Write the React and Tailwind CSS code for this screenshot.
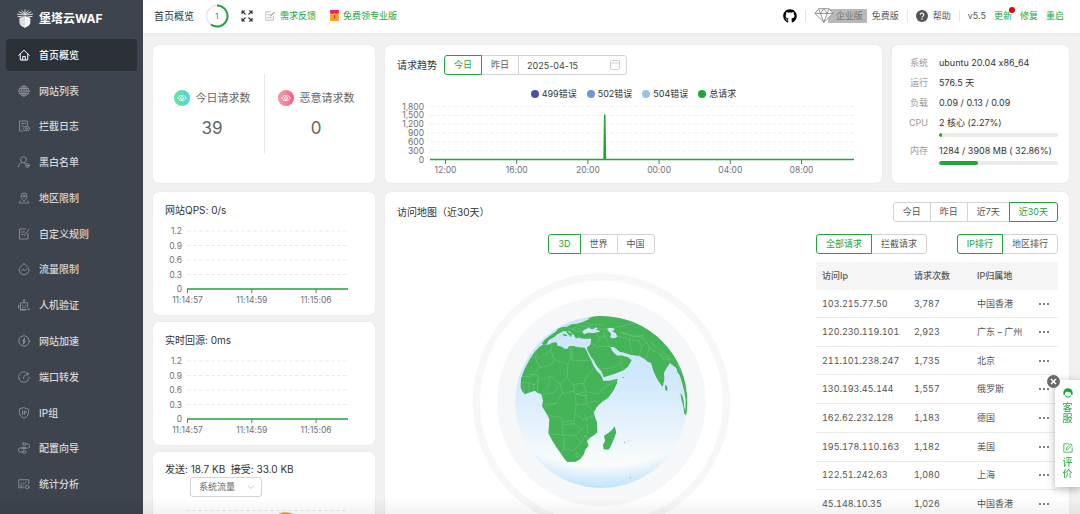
import React from "react";
import { FaGithub } from "react-icons/fa";

/* ---------- sidebar icons ---------- */

const Stroke = ({ children, className = "size-3" }) => (
  <svg
    viewBox="0 0 24 24"
    fill="none"
    stroke="currentColor"
    strokeWidth="1.8"
    strokeLinecap="round"
    strokeLinejoin="round"
    className={className}
    aria-hidden="true"
  >
    {children}
  </svg>
);

const icons = {
  home: (
    <g strokeWidth="2">
      <path d="M1.5 12.5 12 2.5l10.5 10" />
      <path d="M4.5 11v11h15V11" />
      <path d="M9.5 22v-7h5v7" />
    </g>
  ),
  globe: (
    <>
      <circle cx="12" cy="12" r="10" />
      <ellipse cx="12" cy="12" rx="4.6" ry="10" />
      <path d="M12 2v20M2 12h20M3.6 7h16.8M3.6 17h16.8" />
    </>
  ),
  log: (
    <>
      <path d="M10 22H3V2h16v8" />
      <path d="M7 7h8M7 12h4" />
      <ellipse cx="17" cy="17" rx="6" ry="4.6" />
      <circle cx="17" cy="17" r="1.6" />
    </>
  ),
  user: (
    <>
      <circle cx="11" cy="7.5" r="6" />
      <path d="M1 22c0-4.500 2.500-7.500 6-8.800" />
      <path d="M13 14.500c1 .3 1.500.6 2 1" />
      <circle cx="19" cy="19" r="3.800" />
      <path d="M17 19h4" />
    </>
  ),
  pin: (
    <>
      <path d="M12 18c-4-4-6-6.500-6-10a6 6 0 0 1 12 0c0 3.500-2 6-6 10z" />
      <circle cx="12" cy="8" r="2.200" />
      <path d="M5 18l-3 4h20l-3-4" />
    </>
  ),
  rule: (
    <>
      <path d="M15 2H3v20h17V11" />
      <path d="M7 8h6M7 13h3" />
      <path d="M22 3 12.500 15.500" />
    </>
  ),
  drop: (
    <>
      <path d="M12 1.500C16 5 22 8.500 22 14a10 9 0 0 1-20 0C2 8.500 8 5 12 1.500z" />
      <path d="M7 16l3-3.500 3.500 3 3.500-3.500" />
    </>
  ),
  robot: (
    <>
      <path d="M12 2v5" />
      <circle cx="12" cy="2.500" r="1" />
      <path d="M5 20V7.500h14V16" />
      <path d="M5 21.500h11M1.500 13v5M20 20.500h2.500" strokeWidth="2.600" />
      <path d="M9 12v.5M15 12v.5M9 16.500h6" />
    </>
  ),
  bolt: (
    <>
      <circle cx="12" cy="12" r="10.500" />
      <path d="M13 6.500 9.500 12.500h5L11 18z" fill="currentColor" />
    </>
  ),
  forward: (
    <>
      <path d="M14 1.700A10.500 10.500 0 1 0 22.500 12" />
      <path d="M11 15c0-5 3-9 9.500-9.500M16.500 2.500l4.500 3-3 4" />
    </>
  ),
  shield: (
    <>
      <path d="M12 1.500 21 4.500v7c0 5-3.500 8.500-9 11-5.500-2.500-9-6-9-11v-7z" />
      <path d="M9 8v7M12.500 15V8h2a2.200 2.200 0 0 1 0 4.400h-2" />
    </>
  ),
  route: (
    <>
      <rect x="9" y="1.500" width="7" height="5" rx="2.500" />
      <rect x="9" y="17.500" width="7" height="5" rx="2.500" />
      <path d="M16 4h3.500a4 4 0 0 1 0 8H4.500a4 4 0 0 0 0 8H9" />
      <path d="M9 10.500h6v3H9z" />
    </>
  ),
  stats: (
    <>
      <path d="M12 19.500H1.500v-16h20V11" />
      <path d="M5 13.500l4-4 3 3 5-5" />
      <circle cx="18.500" cy="18" r="3.500" />
      <path d="M5 16h5" />
    </>
  ),
};

const menu = [
  ["home", "首页概览"],
  ["globe", "网站列表"],
  ["log", "拦截日志"],
  ["user", "黑白名单"],
  ["pin", "地区限制"],
  ["rule", "自定义规则"],
  ["drop", "流量限制"],
  ["robot", "人机验证"],
  ["bolt", "网站加速"],
  ["forward", "端口转发"],
  ["shield", "IP组"],
  ["route", "配置向导"],
  ["stats", "统计分析"],
];

function Logo() {
  return (
    <svg viewBox="0 0 48 56" className="h-[19px] w-4 shrink-0" aria-hidden="true">
      <path d="M8 25l16-5 16 5v16c0 7-8 11-16 15C16 52 8 48 8 41z" fill="#f4f4f4" />
      <path d="M8 25l16-5v36C16 52 8 48 8 41z" fill="#dcddde" />
      <g stroke="#f4f4f4" strokeWidth="2.600" fill="none" strokeLinecap="round">
        <path d="M24 2v12M14 4l10 10L34 4M6 8l18 8 18-8M1 15l23 3 23-3M3 22l42 0" />
      </g>
      <path d="M6 26l18-6 18 6" stroke="#3d444d" strokeWidth="1.500" fill="none" />
    </svg>
  );
}

function Sidebar() {
  return (
    <aside className="flex h-full w-[143px] shrink-0 flex-col bg-[#3d444d] px-1.5 pb-3 text-white">
      <div className="flex h-[37px] shrink-0 items-center gap-1.5 pl-[11px]">
        <Logo />
        <span className="text-[12px] leading-4 font-bold">堡塔云WAF</span>
      </div>
      <nav className="min-h-0 flex-1">
        <ul className="grid h-full auto-rows-fr">
          {menu.map(([icon, label], i) => (
            <li key={label} className="py-0.5">
              <a
                href="#"
                aria-current={i === 0 ? "page" : undefined}
                className={
                  i === 0
                    ? "flex h-full items-center gap-[9px] rounded bg-[#2c3138] pl-3 font-medium text-white"
                    : "flex h-full items-center gap-[9px] rounded pl-3 font-medium text-[#d6d7d9]"
                }
              >
                <span className={i === 0 ? "text-white" : "text-[#8f9194]"}>
                  <Stroke>{icons[icon]}</Stroke>
                </span>
                <span className="text-[10px] leading-4">{label}</span>
              </a>
            </li>
          ))}
        </ul>
      </nav>
    </aside>
  );
}

/* ---------- header ---------- */

const Divider = () => <span className="h-3 w-px bg-[#e4e4e4]" />;

function Header() {
  return (
    <header className="flex h-[34px] shrink-0 items-center justify-between border-b border-[#e9e9e9] bg-white pr-4 pb-0.5 pl-[11px] text-[9px] leading-4">
      <div className="flex items-center">
        <h1 className="text-[10px] text-[#333]">首页概览</h1>
        <button type="button" aria-label="任务 1" className="ml-[11px]">
          <svg viewBox="0 0 24 24" className="size-6">
            <circle cx="12" cy="12" r="10.500" fill="none" stroke="#ececec" strokeWidth="1.800" />
            <path d="M12 1.500A10.500 10.500 0 1 1 6 20.600" fill="none" stroke="#20a53a" strokeWidth="2" />
            <text x="12" y="15" textAnchor="middle" fontSize="8" fill="#666">1</text>
          </svg>
        </button>
        <button type="button" aria-label="全屏" className="ml-3 text-[#333]">
          <svg viewBox="0 0 24 24" className="size-3" fill="none" stroke="currentColor" strokeWidth="2.200">
            <path d="M2 8V2h6M2 2l7 7M16 2h6v6M22 2l-7 7M2 16v6h6M2 22l7-7M22 16v6h-6M22 22l-7-7" />
          </svg>
        </button>
        <a href="#" className="ml-3 flex items-center gap-[5px] text-[#20a53a]">
          <span className="text-[#aaa]">
            <Stroke className="size-2.5">
              <path d="M13 2H2v20h18V12" />
              <path d="M6 9h6M6 16h9" />
              <path d="M22 3 13 12" strokeWidth="2.600" />
            </Stroke>
          </span>
          需求反馈
        </a>
        <a href="#" className="ml-3.5 flex items-center gap-1 text-[#20a53a]">
          <svg viewBox="0 0 24 30" className="h-[11px] w-[9px]" aria-hidden="true">
            <rect width="24" height="30" rx="2" fill="#f9a11b" />
            <path d="M0 2a2 2 0 0 1 2-2h20a2 2 0 0 1 2 2v7q-12 4-24 0z" fill="#e5246b" />
            <circle cx="12" cy="12" r="3.500" fill="#f9a11b" />
            <path d="M10.500 14h3v9h-3z" fill="#e5246b" />
          </svg>
          免费领专业版
        </a>
      </div>
      <div className="flex items-center gap-2 text-[#555]">
        <a href="#" aria-label="GitHub" className="text-black">
          <FaGithub className="size-3.5" />
        </a>
        <Divider />
        <div className="flex items-center gap-[5px]">
          <a href="#" className="flex items-center text-[#888]">
            <svg viewBox="0 0 57 44" className="z-10 -mr-1.5 h-[15px] w-5" fill="#fff" stroke="#888" strokeWidth="2.600" strokeLinejoin="round" aria-hidden="true">
              <path d="M13 2h30l12 14-27 26L2 16z" />
              <path d="M2 16h53M13 2l5 14 10 26 10-26 5-14M18 16 28 2l10 14" fill="none" />
            </svg>
            <span className="h-3.5 bg-[#b9b9b9] pr-1 pl-2 leading-[14px] text-[#777]">企业版</span>
          </a>
          <span>免费版</span>
        </div>
        <Divider />
        <a href="#" className="flex items-center gap-[5px]">
          <svg viewBox="0 0 24 24" className="size-3" aria-hidden="true">
            <circle cx="12" cy="12" r="12" fill="#555" />
            <path d="M8.500 9.500a3.500 3.500 0 1 1 5.500 2.800c-1.300.9-2 1.400-2 2.700" fill="none" stroke="#fff" strokeWidth="2.200" />
            <circle cx="12" cy="18" r="1.500" fill="#fff" />
          </svg>
          帮助
        </a>
        <Divider />
        <span>v5.5</span>
        <a href="#" className="relative text-[#20a53a]">
          更新
          <span className="absolute -top-px -right-[3px] size-1.5 rounded-full bg-red-600" />
        </a>
        <a href="#" className="text-[#20a53a]">修复</a>
        <a href="#" className="text-[#20a53a]">重启</a>
      </div>
    </header>
  );
}

/* ---------- shared parts ---------- */

const Card = ({ className = "", children }) => (
  <section className={"min-w-0 rounded-md bg-white shadow-[0_0_2px_rgba(0,0,0,0.08)] " + className}>
    {children}
  </section>
);

function Segmented({ items, active, label, joined = false }) {
  return (
    <div role="group" aria-label={label} className="flex text-[9px]">
      {items.map((item, i) => (
        <button
          key={item}
          type="button"
          aria-pressed={i === active}
          className={
            "h-5 border px-[9px] leading-[18px] first:rounded-l-[3px] " +
            (i > 0 ? "-ml-px " : "") +
            (joined ? "" : "last:rounded-r-[3px] ") +
            (i === active
              ? "z-10 border-[#20a53a] text-[#20a53a]"
              : "border-[#d4d4d4] text-[#555]")
          }
        >
          {item}
        </button>
      ))}
    </div>
  );
}

/* ---------- statistics ---------- */

function Stat({ id, from, to, label, value }) {
  return (
    <div className="flex flex-col items-center gap-2 text-[#666]">
      <div className="flex h-5 items-center gap-1.5">
        <svg viewBox="0 0 48 48" className="size-4" aria-hidden="true">
          <defs>
            <linearGradient id={id}>
              <stop offset="0.300" stopColor={from} />
              <stop offset="1" stopColor={to} />
            </linearGradient>
          </defs>
          <circle cx="24" cy="24" r="24" fill={"url(#" + id + ")"} />
          <path d="M11 24c3-5 8-8 13-8s10 3 13 8c-3 5-8 8-13 8s-10-3-13-8z" fill="none" stroke="#fff" strokeWidth="2.600" />
          <circle cx="24" cy="24" r="4.500" fill="none" stroke="#fff" strokeWidth="2.600" />
        </svg>
        <span className="text-[11px]">{label}</span>
      </div>
      <span className="text-[17px] leading-6">{value}</span>
    </div>
  );
}

function TrendCard() {
  const labels = ["1,800", "1,500", "1,200", "900", "600", "300", "0"];
  const times = ["12:00", "16:00", "20:00", "00:00", "04:00", "08:00"];
  const legend = [
    ["499错误", "bg-[#46559e]"],
    ["502错误", "bg-[#7296cf]"],
    ["504错误", "bg-[#9cc1e6]"],
    ["总请求", "bg-[#20a53a]"],
  ];
  return (
    <Card>
      <div className="flex items-center pt-[10px] pl-3">
        <h2 className="mr-[7px] text-[10px] text-[#333]">请求趋势</h2>
        <Segmented items={["今日", "昨日"]} active={0} label="请求趋势日期" joined />
        <label className="relative -ml-px block text-[#c4c4c4]">
          <input
            type="text"
            aria-label="日期"
            defaultValue="2025-04-15"
            className="block h-5 w-[109px] rounded-r-[3px] border border-[#d4d4d4] pl-2 text-[9px] text-[#444] outline-none"
          />
          <svg viewBox="0 0 20 20" className="absolute top-[5px] right-[7px] size-2.5" fill="none" stroke="currentColor" strokeWidth="1.600">
            <rect x="1" y="1" width="18" height="18" rx="2" />
            <path d="M1 6h18" />
          </svg>
        </label>
      </div>
      <ul className="mt-3 flex h-3.5 items-center justify-center gap-[10px] text-[9px] text-[#333]">
        {legend.map(([name, color]) => (
          <li key={name} className="flex items-center gap-[3px]">
            <span className={"size-2 rounded-full " + color} />
            {name}
          </li>
        ))}
      </ul>
      <svg viewBox="-1 0 497 78" className="block w-full" fontSize="8.500" fill="#6e7079" role="img" aria-label="请求趋势图">
        {labels.map((t, i) => (
          <text key={t} x="38" y={8.500 + i * 8.850} textAnchor="end">{t}</text>
        ))}
        {labels.slice(0, 6).map((t, i) => (
          <path key={t} d={"M44 " + (5.500 + i * 8.850) + "H468"} stroke="#f0f0f0" strokeDasharray="4 2" />
        ))}
        {times.map((t, i) => (
          <g key={t}>
            <path d={"M" + (59.500 + i * 71.200) + " 59v4"} stroke="#6e7079" />
            <text x={59.500 + i * 71.200} y="72" textAnchor="middle">{t}</text>
          </g>
        ))}
        <path d="M44 58.500H218l.7-45 .8 45H468" fill="none" stroke="#20a53a" strokeWidth="1.500" />
      </svg>
    </Card>
  );
}

function Meter({ value, label }) {
  return (
    <div role="progressbar" aria-label={label} aria-valuenow={value} className="h-1 overflow-hidden rounded-full bg-[#ebebeb]">
      <div className="h-full rounded-full bg-[#20a53a]" style={{ width: value + "%" }} />
    </div>
  );
}

function SystemCard() {
  const rows = [
    ["系统", "ubuntu 20.04 x86_64"],
    ["运行", "576.5 天"],
    ["负载", "0.09 / 0.13 / 0.09"],
    ["CPU", "2 核心 (2.27%)", 2.27],
    ["内存", "1284 / 3908 MB ( 32.86%)", 32.86],
  ];
  return (
    <Card className="pt-2 pr-[11px] pl-[14px] text-[9px]">
      <dl>
        {rows.map(([k, v, pct]) => (
          <div key={k} className={pct === undefined ? "flex gap-[11px]" : "mb-1 flex gap-[11px]"}>
            <dt className="w-[22px] shrink-0 text-right leading-5 text-[#999]">{k}</dt>
            <dd className="min-w-0 flex-1 leading-5 whitespace-nowrap text-[#333]">
              {v}
              {pct !== undefined && <Meter value={pct} label={k} />}
            </dd>
          </div>
        ))}
      </dl>
    </Card>
  );
}

function MiniChart({ title }) {
  const labels = ["1.2", "0.9", "0.6", "0.3", "0"];
  const times = ["11:14:57", "11:14:59", "11:15:06"];
  return (
    <Card className="h-[123px] overflow-hidden">
      <h2 className="pt-[9px] pl-3 text-[10px] leading-[18px] text-[#333]">{title}</h2>
      <svg viewBox="-1 0 222 92" className="mt-1 block w-full" fontSize="8.500" fill="#6e7079" role="img" aria-label={title}>
        {labels.map((t, i) => (
          <text key={t} x="28" y={11 + i * 14.500} textAnchor="end">{t}</text>
        ))}
        {labels.slice(0, 4).map((t, i) => (
          <path key={t} d={"M33 " + (8 + i * 14.500) + "H194"} stroke="#ececec" strokeDasharray="4 2" />
        ))}
        {times.map((t, i) => (
          <g key={t}>
            <path d={"M" + (33.500 + i * 64.300) + " 66v4"} stroke="#6e7079" />
            <text x={33.500 + i * 64.300} y="79.500" textAnchor="middle">{t}</text>
          </g>
        ))}
        <path d="M33 66H194" stroke="#20a53a" strokeWidth="1.500" />
      </svg>
    </Card>
  );
}

function TrafficCard() {
  return (
    <Card className="h-[220px] overflow-hidden">
      <h2 className="pt-[9px] pl-3 text-[10px] leading-4 text-[#333]">
        发送: 18.7 KB&nbsp; 接受: 33.0 KB
      </h2>
      <label className="relative ml-[37px] block w-[72px] text-[#bbb]">
        <select aria-label="流量类型" className="block h-5 w-full appearance-none rounded-[3px] border border-[#d4d4d4] bg-white pl-2 text-[9px] text-[#666] outline-none">
          <option>系统流量</option>
        </select>
        <svg viewBox="0 0 14 8" className="pointer-events-none absolute top-2 right-[7px] h-1 w-2" fill="none" stroke="currentColor" strokeWidth="1.600">
          <path d="M1 1l6 6 6-6" />
        </svg>
      </label>
      <svg viewBox="-1 0 222 150" className="block w-full" aria-hidden="true">
        <path d="M32 13.500h161M32 43.500h161M32 73.500h161M32 103.500h161" stroke="#ececec" strokeDasharray="4 2" />
        <path d="M60 100C90 90 105 16.500 131 16.500S165 60 193 100" fill="none" stroke="#f7941d" strokeWidth="2.500" />
      </svg>
    </Card>
  );
}

/* ---------- globe ---------- */

function Globe() {
  const sea = "#cfe7fb";
  return (
    <svg viewBox="22 234 801 774" className="w-[267px] max-w-full" role="img" aria-label="3D 访问地图">
      <defs>
        <linearGradient id="ocean" x1="0" y1="0" x2="0" y2="1">
          <stop offset="0" stopColor="#c6e4fd" />
          <stop offset="0.350" stopColor="#cfe8fd" />
          <stop offset="0.650" stopColor="#e7f3fb" />
          <stop offset="0.850" stopColor="#fafcfb" />
          <stop offset="1" stopColor="#fafcfb" />
        </linearGradient>
        <radialGradient id="glow" gradientUnits="userSpaceOnUse" cx="422" cy="300" r="580">
          <stop offset="0.880" stopColor="#bfe2fd" stopOpacity="0" />
          <stop offset="1" stopColor="#bfe2fd" />
        </radialGradient>
        <clipPath id="sphere">
          <circle cx="422" cy="621" r="258" />
        </clipPath>
      </defs>
      <circle cx="422" cy="621" r="375" fill="none" stroke="#f6f7f9" strokeWidth="22" />
      <circle cx="422" cy="621" r="313" fill="#f6f7f9" />
      <circle cx="422" cy="621" r="258" fill="url(#ocean)" />
      <g clipPath="url(#sphere)">
        <rect x="164" y="740" width="516" height="140" fill="url(#glow)" />
        <g fill="#45b358">
          <path d="M236 456 249 447 263 449 274 443 287 442 291 452 303 455 311 461 321 461 325 453 338 453 354 457 372 458 378 468 383 480 391 494 399 513 409 528 418 537 425 548 427 557 446 557 471 551 469 565 459 586 443 608 424 621 409 635 400 651 402 664 409 681 410 712 401 720 388 728 379 739 384 752 374 764 369 779 359 792 346 800 320 801 312 793 301 776 287 757 276 739 263 715 265 690 266 672 257 655 244 634 247 617 242 598 230 593 223 587 209 592 192 598 184 588 180 576 181 551 189 529 197 512 209 490 222 470z" />
          <path d="M243 447 252 434 266 424 278 415 287 409 291 402 304 396 318 395 333 388 349 386 364 380 378 374 385 369 400 363 422 360 500 365 590 415 650 490 676 560 683 640 678 659 674 650 675 615 671 590 664 563 657 541 651 533 647 519 638 512 628 504 621 514 610 533 611 554 606 576 599 567 589 551 579 530 571 503 562 501 551 491 536 483 511 480 491 473 477 470 460 456 449 456 455 468 463 477 470 482 484 481 489 484 501 486 513 496 503 514 489 526 461 537 429 547 423 530 408 512 400 498 390 484 380 465 379 457 388 451 391 431 375 432 359 430 352 426 342 430 331 424 318 409 308 409 291 417 281 426 265 435 258 447z" />
          <path d="M462 694 467 712 460 731 449 757 443 764 429 763 427 750 433 737 430 722 443 714 453 706z" />
          <path d="M613 570 618 572 621 581 619 588 614 585zM304 416l15 3-1 5-9-2zM359 435h14v2h-13zM485 546h5v2h-5zM490 741l4-1 1 2-4 1zM501 737h3v2h-3zM507 846l3-1 1 3h-3z" />
        </g>
        <g fill={sea}>
          <path d="M365 412 369 405 377 402 383 397 389 401 397 403 407 397 411 401 404 404 414 406 418 410 399 414 381 413 371 418z" />
          <path d="M439 402 446 398 459 400 461 405 454 409 465 414 470 424 465 429 455 430 448 426 452 417 444 409z" />
          <path d="M333 384 352 378 371 373 388 371 374 377 359 383zM316 408 326 408 335 418 342 420 346 428 332 431 327 423z" />
          <path d="M299 431 315 430 331 424 354 432 391 431 389 449 377 455 356 455 330 451 304 452 290 443z" />
          <path d="M645 528 656 540 662 560 669 588 672 630 666 622 659 592 655 566z" />
        </g>
        <g fill="#45b358">
          <path d="M318 404 325 412 334 418 331 427 326 421 318 413zM339 413 351 415 353 426 350 431 342 425z" />
          <path d="M659 594 665 602 669 617 670 635 677 653 676 660 671 656 668 636 662 613z" />
        </g>
        <g fill="none" stroke="#fff" strokeOpacity="0.300" strokeWidth="1.400" strokeLinejoin="round">
          <path d="M209 490l13-8 14 36-28 28-26-2M222 470l12 20 36-23 4-24M236 518l34-8 12-16-12-27M282 494l40 14 8-18-2-38M334 453v43l55 0M322 508l-3 40-20 20-31-24-28 10-10-13-26-4M185 565l20-2 16 7 11-18M190 595v-22M205 592v-28M214 590l7-22M230 590l2-36M268 544l-5 30-20 18M299 568l-18 25-36 5M319 548l19 20 30-3 13-25 19-20M338 568l5 20-40 8-17 28-38 6M299 568l9 30M368 565l8 25 33 7 22-20 40-22M376 590l-30 8-13-10M376 597v28l38-8M346 598l30 5M344 602l2 28-4 28 32 16 27-14M346 630l30-4 24 25M248 640l38-16M262 662l38 5 5 15 30-6M305 682l2 38-43-3M342 658l-2 28-33 4M340 686l22 18 18-16 1 30M307 720l35 2 20-18M310 722v40l-10 12M342 722l20 22-23 22-30-4M362 744l13-24 7 18M380 680l-8-20M344 777l8-2 5 6-8 6z" />
          <path d="M388 440l22 16 30-2 12 2M398 452l14-14 4-12 17 0 12 24M424 522l36-4 20-14 3-20M480 504l9 20M415 426l-9-12M432 426l-4-16M470 424l36 8 3 22 7 26M506 432l28 6 10 16-8 28M544 454l14-14-12-14-24-4-48-12M534 438l15-12M558 440l8 20-10 30M566 460l30 16 32 18M596 476l8 14 26 6M566 440l40 30 34 28M470 396l50-10M470 396l-10 6M480 412l40 14 28-6M300 396l12 16M318 395l16 10 12-8 16 8M349 386l12 8 30-2M364 380l24 8 38 2M390 398l30 4 20 0M330 400l20 10 14-2M651 500l8 30" />
        </g>
      </g>
    </svg>
  );
}

/* ---------- visit map ---------- */

const visits = [
  ["103.215.77.50", "3,787", "中国香港"],
  ["120.230.119.101", "2,923", "广东 – 广州"],
  ["211.101.238.247", "1,735", "北京"],
  ["130.193.45.144", "1,557", "俄罗斯"],
  ["162.62.232.128", "1,183", "德国"],
  ["195.178.110.163", "1,182", "美国"],
  ["122.51.242.63", "1,080", "上海"],
  ["45.148.10.35", "1,026", "中国香港"],
];

function VisitTable() {
  return (
    <table className="mt-2 h-[257px] w-full table-fixed text-left text-[9px] leading-3 text-[#555] tabular-nums">
      <colgroup>
        <col className="w-[92px]" />
        <col className="w-[63px]" />
        <col />
        <col className="w-[26px]" />
      </colgroup>
      <thead>
        <tr className="h-7 bg-[#f5f5f5]">
          <th scope="col" className="pl-1.5 font-medium">访问Ip</th>
          <th scope="col" className="pl-1.5 font-medium">请求次数</th>
          <th scope="col" className="pl-1.5 font-medium">IP归属地</th>
          <th scope="col" aria-label="操作" />
        </tr>
      </thead>
      <tbody>
        {visits.map(([ip, count, place]) => (
          <tr key={ip} className="border-b border-[#ebebeb]">
            <td className="pl-1.5">{ip}</td>
            <td className="pl-1.5">{count}</td>
            <td className="pl-1.5">{place}</td>
            <td>
              <button type="button" aria-label={ip + " 更多"} className="flex h-3 items-center gap-0.5 pl-[7px]">
                <span className="size-0.5 rounded-full bg-[#555]" />
                <span className="size-0.5 rounded-full bg-[#555]" />
                <span className="size-0.5 rounded-full bg-[#555]" />
              </button>
            </td>
          </tr>
        ))}
      </tbody>
    </table>
  );
}

function MapCard() {
  return (
    <Card className="pt-[10px] pr-[11px] pl-3">
      <div className="flex items-center justify-between">
        <h2 className="text-[10px] text-[#333]">访问地图（近30天）</h2>
        <Segmented items={["今日", "昨日", "近7天", "近30天"]} active={3} label="时间范围" />
      </div>
      <div className="mt-3 flex gap-[10px]">
        <div className="flex min-w-0 flex-1 flex-col items-center">
          <Segmented items={["3D", "世界", "中国"]} active={0} label="地图类型" />
          <div className="mt-[19px]">
            <Globe />
          </div>
        </div>
        <div className="w-[242px] shrink-0">
          <div className="flex justify-between">
            <Segmented items={["全部请求", "拦截请求"]} active={0} label="请求类型" />
            <Segmented items={["IP排行", "地区排行"]} active={0} label="排行类型" />
          </div>
          <VisitTable />
        </div>
      </div>
    </Card>
  );
}

/* ---------- floating service panel ---------- */

function ServicePanel() {
  return (
    <aside className="fixed top-[380px] right-0 z-20 flex w-[25px] flex-col items-center gap-[19px] bg-white py-2 text-[10px] leading-[11px] text-[#20a53a] shadow-[0_2px_8px_rgba(0,0,0,0.3)]">
      <button type="button" aria-label="关闭" className="absolute -top-[5px] -left-[8px]">
        <svg viewBox="0 0 26 26" className="size-[13px]">
          <circle cx="13" cy="13" r="13" fill="#6b6b6b" />
          <path d="M8 8l10 10M18 8 8 18" stroke="#fff" strokeWidth="3" />
        </svg>
      </button>
      <a href="#" className="flex w-2.5 flex-col items-center gap-1 break-all">
        <svg viewBox="0 0 30 30" className="size-2.5" fill="#20a53a" aria-hidden="true">
          <path d="M1 15C1 6 7 1 15 1s14 5 14 14v5h-5v-6c-5 0-9-1-12-4-1 2-3 4-6 4v6H1z" />
          <path d="M7 21c3 5 10 6 15 2l2 2c-6 6-15 5-19-3z" />
        </svg>
        客服
      </a>
      <a href="#" className="flex w-2.5 flex-col items-center gap-1 break-all">
        <Stroke className="size-2.5">
          <path d="M14 2H2v20h20V11" />
          <path d="M8 16l1-5 10-9 3 3-10 10z" />
        </Stroke>
        评价
      </a>
    </aside>
  );
}

export default function App() {
  return (
    <div className="flex h-screen overflow-hidden bg-[#f1f1f1] font-['Inter','Noto_Sans_CJK_SC',sans-serif] [font-variant-ligatures:no-contextual]">
      <Sidebar />
      <div className="flex min-w-0 flex-1 flex-col">
        <Header />
        <main className="min-h-0 flex-1 overflow-y-auto pt-[11px] pr-[11px] pl-[10px] [scrollbar-width:none]">
          <div className="grid min-h-[138px] grid-cols-[222fr_497fr_177fr] gap-[10px]">
            <Card className="flex items-center justify-center gap-[13px]">
              <Stat id="today" from="#5fe3a9" to="#4fd0e8" label="今日请求数" value="39" />
              <span className="h-20 w-px bg-[#e8e8e8]" />
              <Stat id="malicious" from="#f78fa0" to="#ec5f85" label="恶意请求数" value="0" />
            </Card>
            <TrendCard />
            <SystemCard />
          </div>
          <div className="mt-[9px] grid grid-cols-[222fr_684fr] gap-[10px]">
            <div className="flex min-w-0 flex-col gap-[7px]">
              <MiniChart title="网站QPS: 0/s" />
              <MiniChart title="实时回源: 0ms" />
              <TrafficCard />
            </div>
            <MapCard />
          </div>
        </main>
      </div>
      <ServicePanel />
      <div className="pointer-events-none fixed inset-x-0 bottom-0 h-4 bg-linear-to-b from-transparent to-black/5" />
    </div>
  );
}
